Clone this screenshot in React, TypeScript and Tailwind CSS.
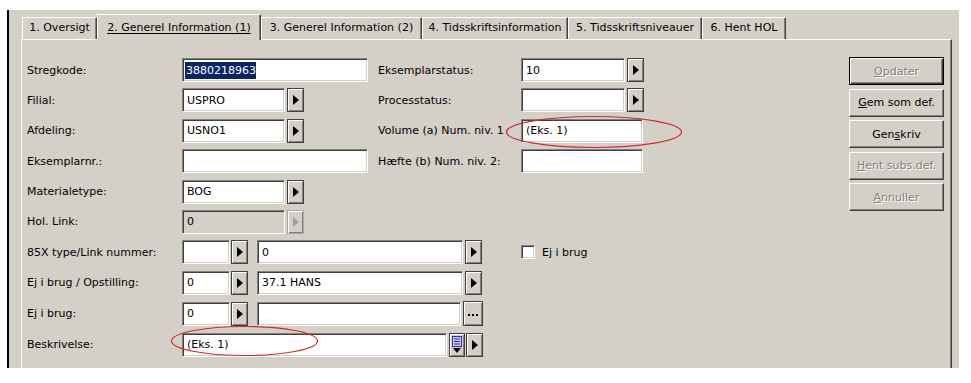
import React from "react";

const sunken =
  "border border-t-[#808080] border-l-[#808080] border-r-white border-b-white shadow-[inset_1px_1px_0_#404040,inset_-1px_-1px_0_#d4d0c8]";

function Field({
  w,
  children,
  disabled,
}: {
  w: string;
  children?: React.ReactNode;
  disabled?: boolean;
}) {
  return (
    <div
      className={`h-[24px] ${w} ${sunken} ${
        disabled ? "bg-[#d4d0c8]" : "bg-white"
      } flex items-center pl-[4px] shrink-0 overflow-hidden whitespace-nowrap text-black`}
    >
      {children}
    </div>
  );
}

function ArrowBtn({ disabled }: { disabled?: boolean }) {
  return (
    <div
      className={`w-[17px] h-[24px] shrink-0 bg-[#d4d0c8] border ${
        disabled ? "border-[#a8a8a8]" : "border-[#404040]"
      } shadow-[inset_1px_1px_0_#ffffff,inset_-1px_-1px_0_#808080] flex items-center justify-center`}
    >
      <svg width="6" height="10" viewBox="0 0 6 10">
        <path d="M0 0 L6 5 L0 10 Z" fill={disabled ? "#a0a0a0" : "#000"} />
      </svg>
    </div>
  );
}

function DotsBtn() {
  return (
    <div className="w-[20px] h-[25px] shrink-0 bg-[#d4d0c8] border border-[#404040] shadow-[inset_1px_1px_0_#ffffff,inset_-1px_-1px_0_#808080] flex items-center justify-center gap-[2px] pt-[2px]">
      <span className="w-[2px] h-[2px] bg-black" />
      <span className="w-[2px] h-[2px] bg-black" />
      <span className="w-[2px] h-[2px] bg-black" />
    </div>
  );
}

function ListBtn() {
  return (
    <div className="w-[16px] h-[24px] shrink-0 bg-[#d4d0c8] border border-[#404040] shadow-[inset_1px_1px_0_#ffffff,inset_-1px_-1px_0_#808080] flex items-center justify-center">
      <svg width="10" height="18" viewBox="0 0 10 18">
        <rect x="0.5" y="0.5" width="9" height="10" fill="#c8c8f0" stroke="#3030c0" />
        <line x1="2" y1="3" x2="8" y2="3" stroke="#3030c0" />
        <line x1="2" y1="5.5" x2="8" y2="5.5" stroke="#3030c0" />
        <line x1="2" y1="8" x2="8" y2="8" stroke="#3030c0" />
        <path d="M1 12 L9 12 L5 17 Z" fill="#000" />
      </svg>
    </div>
  );
}

function Label({ children, w }: { children: React.ReactNode; w: string }) {
  return (
    <div className={`${w} shrink-0 whitespace-nowrap text-black`}>{children}</div>
  );
}

function Tab({
  w,
  children,
  active,
}: {
  w: string;
  children: React.ReactNode;
  active?: boolean;
}) {
  if (active) {
    return (
      <div
        className={`${w} h-[26px] -mb-px relative z-10 bg-[#d4d0c8] border-t border-l border-white border-r border-r-[#404040] shadow-[inset_-1px_0_0_#808080] flex items-start justify-center pt-[6px] shrink-0`}
      >
        <span className="underline underline-offset-[2px]">{children}</span>
      </div>
    );
  }
  return (
    <div
      className={`${w} h-[22px] bg-[#d4d0c8] border-t border-l border-white border-r border-r-[#404040] shadow-[inset_-1px_0_0_#808080] flex items-start justify-center pt-[3px] shrink-0`}
    >
      {children}
    </div>
  );
}

function Btn({
  children,
  disabled,
  def,
}: {
  children: React.ReactNode;
  disabled?: boolean;
  def?: boolean;
}) {
  const frame = def
    ? "border border-black shadow-[inset_1px_1px_0_#ffffff,inset_-1px_-1px_0_#404040,inset_-2px_-2px_0_#808080]"
    : "border border-t-white border-l-white border-r-[#404040] border-b-[#404040] shadow-[inset_-1px_-1px_0_#808080]";
  return (
    <div
      className={`w-[95px] h-[28px] bg-[#d4d0c8] ${frame} flex items-center justify-center whitespace-nowrap ${
        disabled
          ? "text-[#808080] [text-shadow:1px_1px_0_#ffffff]"
          : "text-black"
      }`}
    >
      {children}
    </div>
  );
}

export default function App() {
  return (
    <div
      className="relative w-[971px] h-[383px] bg-white overflow-hidden text-[11px] leading-[13px]"
      style={{ fontFamily: '"DejaVu Sans", Verdana, sans-serif' }}
    >
      <div className="ml-[7px] pt-0 mt-[10px] w-[952px] h-[358px] bg-[#d4d0c8] border-l-2 border-black flex flex-col pl-[12px] pr-[7px]">
        {/* tabs */}
        <div className="flex items-end h-[25px] mt-[4px] pl-[1px] shrink-0">
          <Tab w="w-[75px]">1. Oversigt</Tab>
          <Tab w="w-[164px]" active>
            2. Generel Information (1)
          </Tab>
          <Tab w="w-[161px]">3. Generel Information (2)</Tab>
          <Tab w="w-[146px]">4. Tidsskriftsinformation</Tab>
          <Tab w="w-[134px]">5. Tidsskriftsniveauer</Tab>
          <Tab w="w-[84px]">6. Hent HOL</Tab>
        </div>
        {/* panel */}
        <div className="flex-1 border-t border-l border-white border-r border-r-[#404040] shadow-[inset_-1px_0_0_#808080] flex">
          <div className="flex flex-col gap-[6.4px] pt-[18px] pl-[5px]">
            {/* row 1 */}
            <div className="flex items-center">
              <Label w="w-[155px]">Stregkode:</Label>
              <div className="w-[196px] flex">
                <Field w="w-[186px]">
                  <span className="bg-[#0a246a] text-white leading-[17px] -ml-[2px] pl-[1px]">
                    3880218963
                  </span>
                </Field>
              </div>
              <Label w="w-[143px]">Eksemplarstatus:</Label>
              <div className="flex gap-[2px]">
                <Field w="w-[104px]">10</Field>
                <ArrowBtn />
              </div>
            </div>
            {/* row 2 */}
            <div className="flex items-center">
              <Label w="w-[155px]">Filial:</Label>
              <div className="w-[196px] flex gap-[2px]">
                <Field w="w-[103px]">USPRO</Field>
                <ArrowBtn />
              </div>
              <Label w="w-[143px]">Processtatus:</Label>
              <div className="flex gap-[2px]">
                <Field w="w-[104px]" />
                <ArrowBtn />
              </div>
            </div>
            {/* row 3 */}
            <div className="flex items-center">
              <Label w="w-[155px]">Afdeling:</Label>
              <div className="w-[196px] flex gap-[2px]">
                <Field w="w-[103px]">USNO1</Field>
                <ArrowBtn />
              </div>
              <Label w="w-[143px]">Volume (a) Num. niv. 1</Label>
              <div className="flex">
                <Field w="w-[122px]">(Eks. 1)</Field>
              </div>
            </div>
            {/* row 4 */}
            <div className="flex items-center">
              <Label w="w-[155px]">Eksemplarnr.:</Label>
              <div className="w-[196px] flex">
                <Field w="w-[186px]" />
              </div>
              <Label w="w-[143px]">Hæfte (b) Num. niv. 2:</Label>
              <div className="flex">
                <Field w="w-[122px]" />
              </div>
            </div>
            {/* row 5 */}
            <div className="flex items-center">
              <Label w="w-[155px]">Materialetype:</Label>
              <div className="flex gap-[2px]">
                <Field w="w-[103px]">BOG</Field>
                <ArrowBtn />
              </div>
            </div>
            {/* row 6 */}
            <div className="flex items-center">
              <Label w="w-[155px]">Hol. Link:</Label>
              <div className="flex gap-[2px]">
                <Field w="w-[103px]" disabled>
                  0
                </Field>
                <ArrowBtn disabled />
              </div>
            </div>
            {/* row 7 */}
            <div className="flex items-center">
              <Label w="w-[155px]">85X type/Link nummer:</Label>
              <div className="w-[339px] flex items-center">
                <Field w="w-[48px]" />
                <div className="ml-[1px]">
                  <ArrowBtn />
                </div>
                <div className="ml-[9px]">
                  <Field w="w-[206px]">0</Field>
                </div>
                <div className="ml-[2px]">
                  <ArrowBtn />
                </div>
              </div>
              <div className="flex items-center gap-[7px]">
                <div className={`w-[14px] h-[14px] bg-white ${sunken}`} />
                <span>Ej i brug</span>
              </div>
            </div>
            {/* row 8 */}
            <div className="flex items-center">
              <Label w="w-[155px]">Ej i brug / Opstilling:</Label>
              <div className="flex items-center">
                <Field w="w-[48px]">0</Field>
                <div className="ml-[1px]">
                  <ArrowBtn />
                </div>
                <div className="ml-[9px]">
                  <Field w="w-[206px]">37.1 HANS</Field>
                </div>
                <div className="ml-[2px]">
                  <ArrowBtn />
                </div>
              </div>
            </div>
            {/* row 9 */}
            <div className="flex items-center">
              <Label w="w-[155px]">Ej i brug:</Label>
              <div className="flex items-center">
                <Field w="w-[48px]">0</Field>
                <div className="ml-[1px]">
                  <ArrowBtn />
                </div>
                <div className="ml-[9px]">
                  <Field w="w-[204px]" />
                </div>
                <div className="ml-[2px]">
                  <DotsBtn />
                </div>
              </div>
            </div>
            {/* row 10 */}
            <div className="flex items-center">
              <Label w="w-[155px]">Beskrivelse:</Label>
              <div className="flex items-center">
                <Field w="w-[265px]">(Eks. 1)</Field>
                <div className="ml-[2px]">
                  <ListBtn />
                </div>
                <div className="ml-[1px]">
                  <ArrowBtn />
                </div>
              </div>
            </div>
          </div>
          {/* buttons */}
          <div className="ml-auto mr-[7px] pt-[17px] flex flex-col gap-[3.5px]">
            <Btn def disabled>
              <span>
                <span className="underline">O</span>pdater
              </span>
            </Btn>
            <Btn>
              <span>
                <span className="underline">G</span>em som def.
              </span>
            </Btn>
            <Btn>
              <span>
                Gen<span className="underline">s</span>kriv
              </span>
            </Btn>
            <Btn disabled>
              <span>
                <span className="underline">H</span>ent subs.def.
              </span>
            </Btn>
            <Btn disabled>
              <span>
                <span className="underline">A</span>nnuller
              </span>
            </Btn>
          </div>
        </div>
      </div>
      {/* red annotation ellipses */}
      <svg
        className="absolute left-0 top-0 pointer-events-none"
        width="971"
        height="383"
      >
        <ellipse cx="594" cy="132" rx="87.5" ry="15.5" fill="none" stroke="#d42a2a" strokeWidth="1.2" />
        <ellipse cx="244.5" cy="341" rx="73" ry="14.5" fill="none" stroke="#d42a2a" strokeWidth="1.2" />
      </svg>
    </div>
  );
}
